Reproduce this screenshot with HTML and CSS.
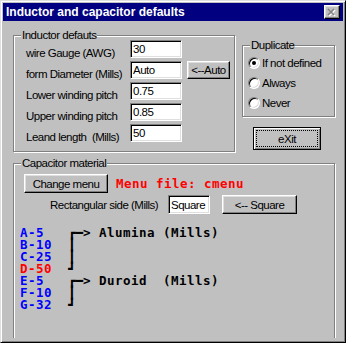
FILE: index.html
```html
<!DOCTYPE html>
<html lang="en">
<head>
  <meta charset="UTF-8">
  <title>Inductor and capacitor defaults</title>
  <link rel="stylesheet" href="styles.css">
</head>
<body>
<div class="window">
  <div class="titlebar">
    <span class="title">Inductor and capacitor defaults</span>
    <span class="close">
      <svg width="10" height="9" viewBox="0 0 10 9">
        <path d="M2 2l6 6M8 2l-6 6" stroke="#fff" stroke-width="1.6"/>
        <path d="M1 1l6 6M7 1l-6 6" stroke="#808080" stroke-width="1.6"/>
      </svg>
    </span>
  </div>

  <div class="client">
    <div class="top">
      <div class="group inductor">
        <span class="group-label">Inductor defauts</span>
        <div class="row"><span class="lbl">wire Gauge (AWG)</span><input class="field" value="30"></div>
        <div class="row"><span class="lbl">form Diameter (Mills)</span><input class="field" value="Auto"><button class="btn auto">&lt;--Auto</button></div>
        <div class="row"><span class="lbl">Lower winding pitch</span><input class="field" value="0.75"></div>
        <div class="row"><span class="lbl">Upper winding pitch</span><input class="field" value="0.85"></div>
        <div class="row"><span class="lbl">Leand length&nbsp; (Mills)</span><input class="field" value="50"></div>
      </div>

      <div class="side">
        <div class="group dup">
          <span class="group-label">Duplicate</span>
          <div class="opt"><span class="radio on"></span>If not defined</div>
          <div class="opt"><span class="radio"></span>Always</div>
          <div class="opt"><span class="radio"></span>Never</div>
        </div>
        <button class="btn exit"><span class="focus">eXit</span></button>
      </div>
    </div>

    <div class="group cap">
      <span class="group-label">Capacitor material</span>
      <div class="cap-row">
        <button class="btn change">Change menu</button>
        <span class="menu-file">Menu file: cmenu</span>
      </div>
      <div class="rect-row">
        <span class="rect-lbl">Rectangular side (Mills)</span>
        <input class="field square" value="Square">
        <button class="btn sq-btn">&lt;-- Square</button>
      </div>
<div class="list"><span class="blue">A-5</span>   <span class="box">┏━</span>&gt; Alumina (Mills)
<span class="blue">B-10</span>  <span class="box">┃</span>
<span class="blue">C-25</span>  <span class="box">┃</span>
<span class="red">D-50</span>  <span class="box">┛</span>
<span class="blue">E-5</span>   <span class="box">┏━</span>&gt; Duroid  (Mills)
<span class="blue">F-10</span>  <span class="box">┃</span>
<span class="blue">G-32</span>  <span class="box">┛</span></div>
    </div>
  </div>
</div>
</body>
</html>
```

FILE: styles.css
```css
*{box-sizing:border-box;}
body{margin:0;background:#c0c0c0;color:#000;font-family:"Liberation Sans",Arial,sans-serif;font-size:11.5px;letter-spacing:-.5px;}

/* window frame */
.window{width:346px;height:343px;padding:2px;background:#c0c0c0;border:1px solid;border-color:#dfdfdf #000 #000 #dfdfdf;box-shadow:inset 1px 1px #fff,inset -1px -1px #808080;}
.titlebar{height:18px;background:#000080;color:#fff;display:flex;align-items:center;justify-content:space-between;padding:0 3px 0 3px;}
.title{font-weight:bold;font-size:12px;letter-spacing:0;}
.close{width:16px;height:14px;display:flex;align-items:center;justify-content:center;background:#c0c0c0;border:1px solid;border-color:#fff #000 #000 #fff;box-shadow:inset -1px -1px #808080,inset 1px 1px #dfdfdf;}
.client{height:317px;overflow:hidden;padding:14px 0 0 10px;}

/* controls */
.group{position:relative;border:1px solid #808080;box-shadow:inset 1px 1px #fff,1px 1px #fff;}
.group-label{position:absolute;top:-8px;left:7px;padding:0 1px;background:#c0c0c0;line-height:15px;white-space:nowrap;}
.field{width:52px;height:18px;margin:0;padding:0 2px;background:#fff;color:#000;font:inherit;letter-spacing:inherit;outline:none;border:1px solid;border-color:#808080 #fff #fff #808080;box-shadow:inset 1px 1px #000,inset -1px -1px #dfdfdf;}
.btn{margin:0;padding:0;background:#c0c0c0;color:#000;font:inherit;letter-spacing:inherit;white-space:nowrap;border:1px solid;border-color:#fff #000 #000 #fff;box-shadow:inset -1px -1px #808080,inset 1px 1px #dfdfdf;}

/* inductor */
.top{display:flex;align-items:flex-start;}
.inductor{width:222px;height:117px;padding:4px 0 0 12px;}
.row{display:flex;align-items:flex-start;height:21px;}
.lbl{width:104px;margin-top:6px;line-height:15px;white-space:nowrap;}
.auto{width:43px;height:18px;margin-left:5px;}

/* duplicate + exit */
.side{display:flex;flex-direction:column;align-items:flex-start;margin:10px 0 0 7px;}
.dup{width:93px;height:72px;padding:7px 0 0 5px;}
.opt{display:flex;align-items:center;gap:2px;height:20px;white-space:nowrap;}
.radio{position:relative;width:12px;height:12px;border-radius:50%;background:#fff;border:1px solid;border-color:#808080 #fff #fff #808080;box-shadow:inset 1px 1px #000,inset -1px -1px #dfdfdf;}
.radio.on::after{content:"";position:absolute;left:3px;top:3px;width:4px;height:4px;border-radius:50%;background:#000;}
.exit{width:68px;height:23px;margin:10px 0 0 11px;padding:2px;border:1px solid #000;box-shadow:inset 1px 1px #fff,inset -1px -1px #808080;}
.focus{display:flex;align-items:center;justify-content:center;height:100%;border:1px dotted #000;}

/* capacitor */
.cap{width:322px;height:200px;margin-top:11px;}
.cap-row{display:flex;align-items:center;margin:10px 0 0 10px;}
.change{width:84px;height:19px;}
.menu-file{margin-left:8px;color:#f00;font-family:"DejaVu Sans Mono",monospace;font-weight:bold;font-size:12.5px;letter-spacing:.47px;}
.rect-row{display:flex;align-items:center;margin:2px 0 0 36px;}
.rect-lbl{width:118px;white-space:nowrap;}
.square{width:42px;height:19px;}
.sq-btn{width:75px;height:19px;margin-left:12px;}
.list{margin:13px 0 0 6px;white-space:pre;font-family:"DejaVu Sans Mono",monospace;font-weight:bold;font-size:12.5px;letter-spacing:.47px;line-height:12px;}
.box{letter-spacing:0;}
.blue{color:#00f;}
.red{color:#f00;}
```
